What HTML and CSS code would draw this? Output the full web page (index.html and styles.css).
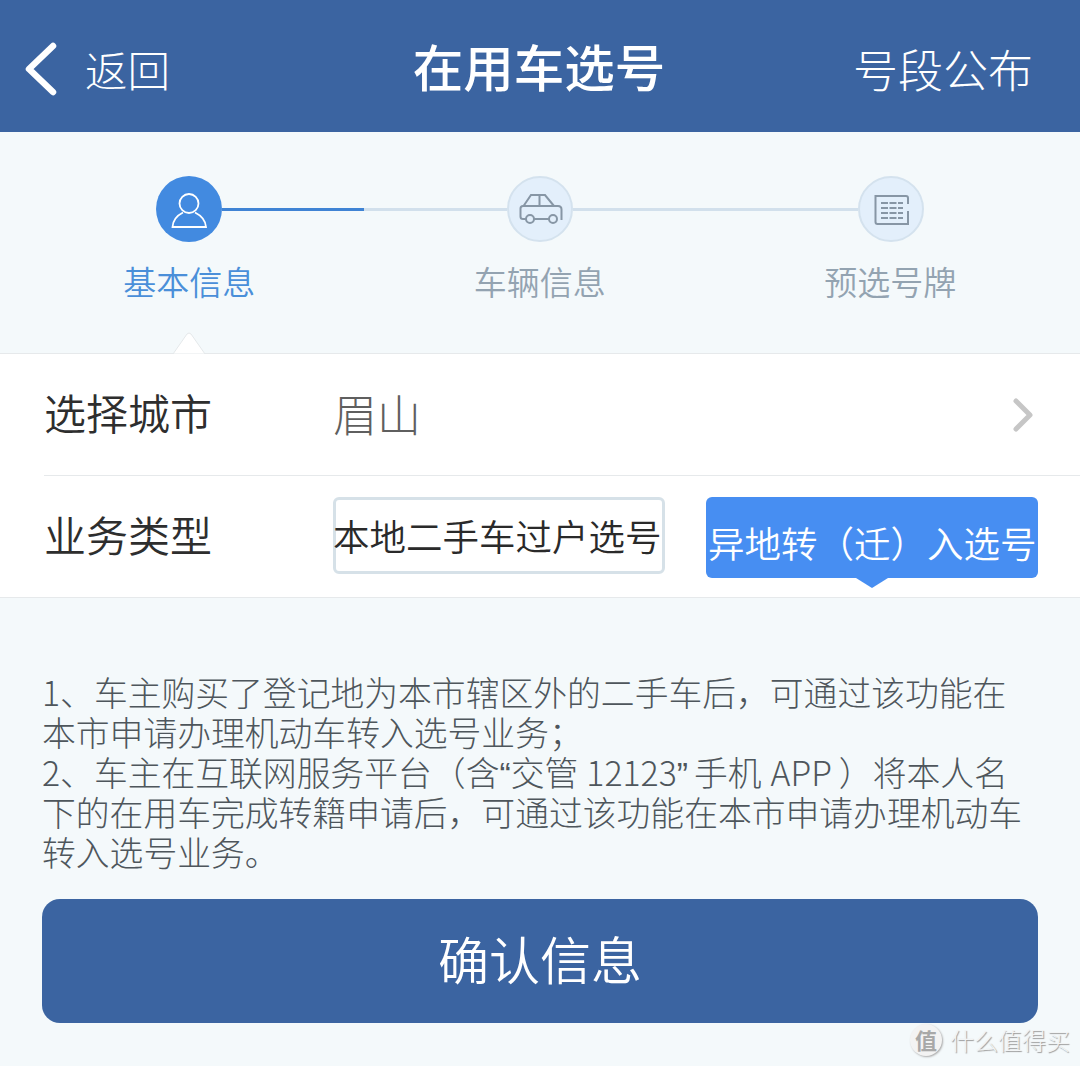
FILE: index.html
```html
<!DOCTYPE html>
<html lang="zh-CN">
<head>
<meta charset="UTF-8">
<meta name="viewport" content="width=device-width, initial-scale=1.0">
<title>在用车选号</title>
<link rel="stylesheet" href="styles.css">
</head>
<body>

<header class="topbar">
    <a class="back">
        <svg class="back-icon" width="34" height="56" viewBox="0 0 34 56">
            <path d="M29 5 L5 28 L29 51" fill="none" stroke="#fff" stroke-width="6.5" stroke-linecap="round" stroke-linejoin="round"/>
        </svg>
        <span>返回</span>
    </a>
    <h1 class="title">在用车选号</h1>
    <a class="notice">号段公布</a>
</header>

<section class="steps">
    <div class="track">
        <div class="dot dot-active">
            <svg width="66" height="66" viewBox="0 0 66 66" fill="none" stroke="#fff" stroke-width="1.8">
                <circle cx="33" cy="27.500" r="9.500"/>
                <path d="M27 36.500 C22 39 17 43 16.500 51 H50 C49.500 43 44 39 39 36.500"/>
            </svg>
        </div>
        <div class="link"><div class="link-done"></div></div>
        <div class="dot">
            <svg width="62" height="62" viewBox="2 2 62 62" fill="none" stroke="#8796a5" stroke-width="2">
                <path d="M19 43 H16 Q13.500 43 13.500 40.500 V32.500 Q13.500 30 16 30 H51 Q54.500 30 54.500 33.500 V44"/>
                <path d="M16.500 30 L24 19 H38 L47 30 M32.500 19 V30 M27 43 H42"/>
                <circle cx="23" cy="43" r="4"/>
                <circle cx="46" cy="43" r="4"/>
            </svg>
        </div>
        <div class="link"></div>
        <div class="dot">
            <svg width="62" height="62" viewBox="2 2 62 62" fill="none" stroke="#8796a5" stroke-width="2">
                <path d="M50 28 V22 Q50 20 48 20 H17.500 V46 Q17.500 48 19.500 48 H50 V35"/>
                <path d="M23 27 H45 M23 32 H45 M23 37 H45 M23 42 H45" stroke-dasharray="7 1.500"/>
            </svg>
        </div>
    </div>
    <div class="step-names">
        <span class="step-name step-name-active">基本信息</span>
        <span class="step-name">车辆信息</span>
        <span class="step-name">预选号牌</span>
    </div>
    <svg class="pointer" width="34" height="22" viewBox="0 0 34 22">
        <path d="M1 22 L15 2 Q17 0 19 2 L33 22 Z" fill="#fff" stroke="#e4e8ea" stroke-width="1"/>
    </svg>
</section>

<section class="form">
    <div class="row">
        <div class="row-label">选择城市</div>
        <div class="row-value">眉山</div>
        <svg class="row-arrow" width="24" height="36" viewBox="0 0 24 36">
            <path d="M4 4 L18 18 L4 32" fill="none" stroke="#c6c6c6" stroke-width="5" stroke-linecap="round" stroke-linejoin="round"/>
        </svg>
    </div>
    <div class="row row-types">
        <div class="row-label">业务类型</div>
        <div class="type-btn">本地二手车过户选号</div>
        <div class="type-btn type-btn-on">异地转（迁）入选号</div>
    </div>
</section>

<section class="tips">
    <p>1、车主购买了登记地为本市辖区外的二手车后，可通过该功能在<br>
    本市申请办理机动车转入选号业务；<br>
    2、车主在互联网服务平台（含<span class="quote">“</span>交管<span class="latin">12123</span><span class="quote quote-end">”</span>手机<span class="latin latin-app">APP</span>）将本人名<br>
    下的在用车完成转籍申请后，可通过该功能在本市申请办理机动车<br>
    转入选号业务。</p>
    <button class="confirm" type="button">确认信息</button>
</section>

<div class="watermark">
    <span class="watermark-badge">值</span>
    <span class="watermark-text">什么值得买</span>
</div>

</body>
</html>
```

FILE: styles.css
```css
* {
    box-sizing: border-box;
}
html, body {
    margin: 0;
    padding: 0;
}
body {
    position: relative;
    width: 1080px;
    height: 1066px;
    overflow: hidden;
    background-color: #f4f9fb;
    font-family: "Noto Sans CJK SC", "Liberation Sans", sans-serif;
    font-weight: 300;
}

/* top bar */
.topbar {
    display: grid;
    grid-template-columns: minmax(0, 1fr) auto minmax(0, 1fr);
    align-items: center;
    height: 132px;
    padding: 5px 24px 0;
    background-color: #3b64a1;
    color: #fff;
}
.back {
    display: flex;
    align-items: center;
    gap: 27px;
    font-size: 42.500px;
}
.title {
    margin: -7px 2px 0 0;
    font-size: 50.500px;
    font-weight: 500;
}
.notice {
    justify-self: end;
    margin-right: 23px;
    font-size: 45px;
}

/* steps */
.steps {
    position: relative;
    height: 221px;
    padding-top: 44px;
}
.track {
    display: flex;
    align-items: center;
    padding-left: 156px;
}
.dot {
    display: flex;
    flex: none;
    width: 66px;
    height: 66px;
    border: 2px solid #d4e2ee;
    border-radius: 50%;
    background-color: #e3effb;
}
.dot-active {
    border: 0;
    background-color: #428ae0;
}
.link {
    width: 285px;
    height: 3px;
    background-color: #d2e0ec;
}
.link-done {
    width: 142px;
    height: 3px;
    background-color: #3f83d4;
}
.step-names {
    display: grid;
    grid-template-columns: repeat(3, 350.500px);
    margin-top: 17px;
    padding-left: 14px;
}
.step-name {
    text-align: center;
    font-size: 33px;
    font-weight: 350;
    line-height: 44px;
    color: #93a3b1;
}
.step-name-active {
    color: #4a8fd9;
}
.pointer {
    position: absolute;
    left: 172px;
    bottom: -1px;
}

/* form rows */
.form {
    border-top: 1px solid #e6e9eb;
    border-bottom: 1px solid #e6e9eb;
    background-color: #fff;
}
.row {
    display: flex;
    align-items: center;
    height: 121px;
    margin-left: 44px;
    padding-right: 44px;
}
.row-types {
    height: 122px;
    border-top: 1px solid #e6e9eb;
    padding-right: 42px;
}
.row-label {
    flex: none;
    width: 289px;
    margin-top: -6px;
    font-size: 42px;
    font-weight: 350;
    color: #2e2e2e;
}
.row-value {
    margin-top: -4px;
    font-size: 44px;
    color: #5f5f5f;
}
.row-arrow {
    margin-left: auto;
}
.type-btn {
    position: relative;
    flex: none;
    width: 332px;
    height: 77px;
    margin-top: -2px;
    border: 3px solid #d6e1e8;
    border-radius: 6px;
    font-size: 36.500px;
    font-weight: 350;
    line-height: 71px;
    text-indent: -3px;
    white-space: nowrap;
    color: #2a2a2a;
}
.type-btn-on {
    height: 81px;
    margin-top: 2px;
    margin-left: 41px;
    border: 0;
    background-color: #478ef2;
    line-height: 91px;
    text-indent: 2px;
    color: #fff;
}
.type-btn-on::after {
    content: "";
    position: absolute;
    left: 150px;
    top: 81px;
    border-left: 16px solid transparent;
    border-right: 16px solid transparent;
    border-top: 10px solid #478ef2;
}

/* tips and button */
.tips {
    padding: 74px 42px 0;
}
.tips p {
    margin: 0 0 27px;
    font-size: 33.800px;
    line-height: 40px;
    white-space: nowrap;
    color: #4e565c;
}
.quote {
    font-family: "Liberation Sans", sans-serif;
    line-height: 0;
}
.quote-end {
    margin-right: 6px;
}
.latin {
    margin-left: 8px;
    line-height: 0;
}
.latin-app {
    margin-left: 9px;
    margin-right: 7px;
}
.confirm {
    display: block;
    width: 996px;
    height: 124px;
    padding: 0 0 6px;
    border: 0;
    border-radius: 18px;
    background-color: #3b64a1;
    font-family: inherit;
    font-size: 51px;
    font-weight: 350;
    color: #fff;
}

/* watermark */
.watermark {
    position: absolute;
    right: 10px;
    bottom: 10px;
    display: flex;
    align-items: center;
    gap: 8px;
    color: #f2f4f5;
    text-shadow: 1px 1px 1px #9a9a9a;
}
.watermark-badge {
    width: 32px;
    height: 32px;
    border-radius: 50%;
    background-color: #f3f3f3;
    box-shadow: 1px 1px 2px #aaa;
    text-align: center;
    font-size: 22px;
    font-weight: 700;
    line-height: 31px;
    color: #a8a8a8;
    text-shadow: none;
}
.watermark-text {
    font-size: 24px;
    line-height: 32px;
}
```
